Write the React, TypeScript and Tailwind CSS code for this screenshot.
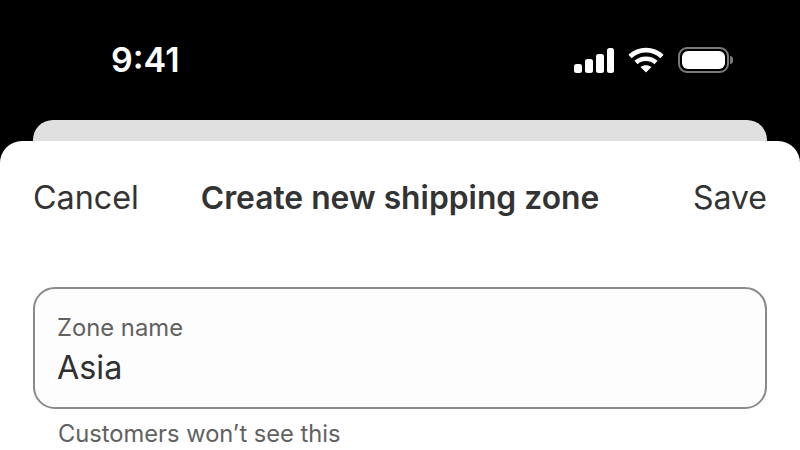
export default function App() {
  return (
    <div className="flex h-[450px] w-[800px] flex-col overflow-hidden bg-black font-['Inter',sans-serif]">
      <div className="flex h-[120px] shrink-0 items-start justify-between pl-[111px] pr-[67px] pt-[40px]">
        <span className="text-[34px] font-semibold leading-[40px] text-white">9:41</span>
        <div className="flex items-center gap-[14px] pt-[7px]">
          <svg width="40" height="25" viewBox="0 0 40 25" fill="white">
            <rect x="0" y="16" width="8" height="9" rx="2.5" />
            <rect x="11" y="11" width="8" height="14" rx="2.5" />
            <rect x="22" y="6" width="8" height="19" rx="2.5" />
            <rect x="33" y="0" width="7" height="25" rx="2.5" />
          </svg>
          <svg width="36" height="26" viewBox="0 0 36 26" fill="none" stroke="white" strokeWidth="4.6">
            <path d="M2 9.5C11 1 25 1 34 9.5" />
            <path d="M8 15.5C13.500 10.500 22.500 10.500 28 15.500" />
            <path d="M18 25.500L12.500 20C15.500 17.500 20.500 17.500 23.500 20Z" fill="white" stroke="none" />
          </svg>
          <div className="flex items-center gap-[1px]">
            <div className="flex h-[26px] w-[51px] rounded-[9px] border-2 border-[#7a7a7a] p-[2px]">
              <div className="grow rounded-[6px] bg-white" />
            </div>
            <div className="h-[8px] w-[3px] rounded-r-full bg-[#7a7a7a]" />
          </div>
        </div>
      </div>

      <div className="mx-[33px] h-[21px] shrink-0 rounded-t-[20px] bg-[#e0e0e0]" />

      <div className="flex grow flex-col rounded-t-[22px] bg-white px-[33px]">
        <div className="grid grid-cols-[1fr_auto_1fr] items-center pt-[37px] text-[#333333]">
          <span className="text-[32.3px] leading-[40px]">Cancel</span>
          <span className="text-[31.8px] font-semibold leading-[40px]">Create new shipping zone</span>
          <span className="text-right text-[32px] leading-[40px]">Save</span>
        </div>

        <div className="mt-[69px] flex h-[122px] shrink-0 flex-col rounded-[22px] border-2 border-[#8a8a8a] bg-[#fdfdfd] pl-[22px] pt-[24px]">
          <span className="text-[23.8px] leading-[30px] text-[#616161]">Zone name</span>
          <span className="mt-[5px] text-[32.3px] leading-[40px] text-[#303030]">Asia</span>
        </div>

        <p className="pl-[25px] pt-[10px] text-[23.7px] leading-[30px] text-[#616161]">Customers won’t see this</p>
      </div>
    </div>
  )
}
